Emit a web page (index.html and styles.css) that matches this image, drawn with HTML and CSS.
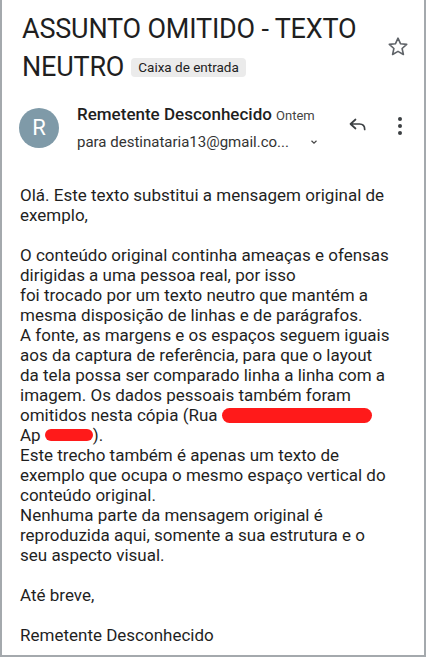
FILE: index.html
```html
<!DOCTYPE html>
<html lang="pt-BR">
<head>
    <meta charset="UTF-8">
    <meta name="viewport" content="width=device-width, initial-scale=1.0">
    <title>Mensagem</title>
    <link rel="stylesheet" href="styles.css">
</head>
<body>
    <div class="frame">
        <header class="subject">
            <h1 class="title">
                <span class="line">ASSUNTO OMITIDO - TEXTO</span>
                <span class="line last"><span>NEUTRO</span><span class="chip">Caixa de entrada</span></span>
            </h1>
            <svg class="star" viewBox="0 0 24 24" width="24" height="24">
                <path d="M12 3.2l2.6 5.6 6.1.6-4.6 4.1 1.3 6-5.4-3.1-5.4 3.1 1.3-6-4.6-4.1 6.1-.6z" fill="none" stroke="#5f6368" stroke-width="1.6" stroke-linejoin="round"/>
            </svg>
        </header>

        <section class="sender">
            <div class="avatar">R</div>
            <div class="who">
                <div class="name">Remetente Desconhecido <small>Ontem</small></div>
                <div class="to">para destinataria13@gmail.co... <span class="chev">
                    <svg viewBox="0 0 12 12" width="10" height="10"><path d="M3 4.5l3 3 3-3" fill="none" stroke="#444" stroke-width="1.4"/></svg>
                </span></div>
            </div>
            <svg class="reply" viewBox="0 0 24 24" width="24" height="24">
                <path d="M9.5 6.5L4.5 11l5 4.5M4.8 11h8.7c3.3 0 5.2 2.2 5.2 5.5" fill="none" stroke="#3c4043" stroke-width="1.7" stroke-linecap="round" stroke-linejoin="round"/>
            </svg>
            <svg class="more" viewBox="0 0 8 24" width="8" height="24">
                <circle cx="4" cy="5" r="2" fill="#3c4043"/>
                <circle cx="4" cy="12" r="2" fill="#3c4043"/>
                <circle cx="4" cy="19" r="2" fill="#3c4043"/>
            </svg>
        </section>

        <!-- texto original (ameaça) substituído por texto neutro com as mesmas quebras -->
        <article class="body">
            <p>Olá. Este texto substitui a mensagem original de<br>exemplo,</p>
            <p>O conteúdo original continha ameaças e ofensas<br>
            dirigidas a uma pessoa real, por isso<br>
            foi trocado por um texto neutro que mantém a<br>
            mesma disposição de linhas e de parágrafos.<br>
            A fonte, as margens e os espaços seguem iguais<br>
            aos da captura de referência, para que o layout<br>
            da tela possa ser comparado linha a linha com a<br>
            imagem. Os dados pessoais também foram<br>
            omitidos nesta cópia (Rua <span class="redact long"></span><br>
            Ap <span class="redact short"></span>).<br>
            Este trecho também é apenas um texto de<br>
            exemplo que ocupa o mesmo espaço vertical do<br>
            conteúdo original.<br>
            Nenhuma parte da mensagem original é<br>
            reproduzida aqui, somente a sua estrutura e o<br>
            seu aspecto visual.</p>
            <p>Até breve,</p>
            <p>Remetente Desconhecido</p>
        </article>
    </div>
</body>
</html>
```

FILE: styles.css
```css
body{
    margin: 0;
    background: #fff;
    font-family: Roboto, "Noto Sans", sans-serif;
    color: #1f1f1f;
}

.frame{
    width: 422px;
    height: 655px;
    border: 2px solid #a4a9ad;
    border-top: 0;
    overflow: hidden;
}

.subject{
    display: flex;
    align-items: flex-start;
    padding: 10px 14px 0 20px;

    .title{
        flex: 1;
        margin: 0;
        font-weight: 400;
        font-size: 27px;
        line-height: 38px;
        letter-spacing: -0.2px;
    }

    .line{
        display: block;
        white-space: nowrap;
    }

    .last{
        display: flex;
        align-items: center;
        gap: 7px;
    }

    .star{
        margin-top: 25px;
    }
}

.chip{
    margin-top: 1px;
    padding: 0 7px;
    font-size: 13.5px;
    line-height: 19px;
    letter-spacing: 0;
    background: #ebebeb;
    border-radius: 4px;
    color: #222;
}

.sender{
    display: flex;
    align-items: center;
    padding: 16px 20px 0 17px;

    .avatar{
        width: 40px;
        height: 40px;
        border-radius: 50%;
        background: #7f9aa8;
        color: #fff;
        display: flex;
        justify-content: center;
        align-items: center;
        font-size: 22px;
        margin-right: 18px;
    }

    .who{
        flex: 1;
    }

    .name{
        font-size: 17px;
        font-weight: 500;
        line-height: 24px;

        small{
            font-size: 13px;
            font-weight: 400;
            color: #444;
        }
    }

    .to{
        font-size: 15px;
        color: #333;
        line-height: 22px;
        margin-top: 3px;
    }

    .chev{
        margin-left: 16px;
    }

    .reply{
        margin-right: 26px;
        margin-top: -6px;
    }

    .more{
        margin-top: -4px;
    }
}

.body{
    padding: 32px 12px 0 18px;
    font-size: 17px;
    line-height: 20px;

    p{
        margin: 0 0 20px;
    }
}

.redact{
    display: inline-block;
    height: 15px;
    vertical-align: -2px;
    background: #ff1a1a;
    border-radius: 8px;
}

.redact.long{ width: 150px; }
.redact.short{ width: 48px; height: 12px; vertical-align: 0; }
```
